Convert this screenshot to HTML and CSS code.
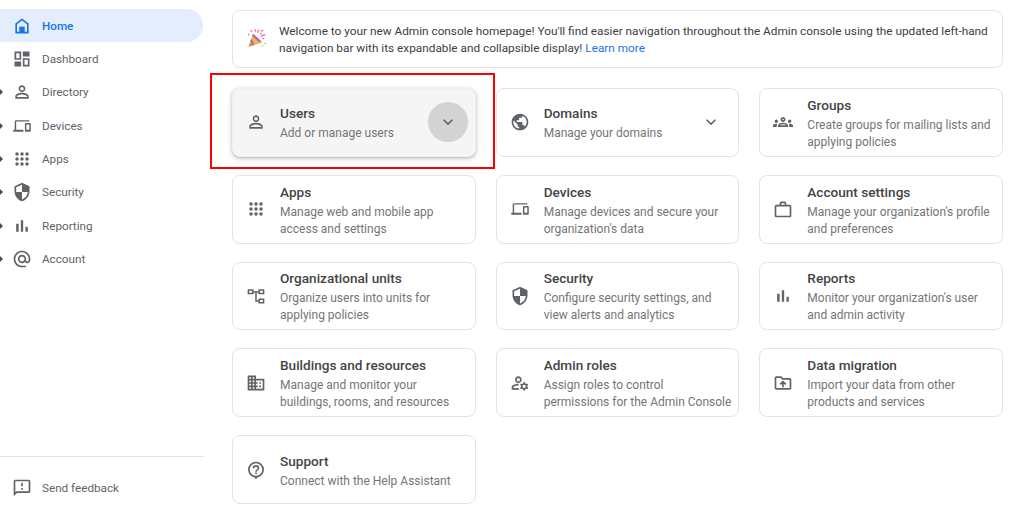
FILE: index.html
```html
<!DOCTYPE html>
<html lang="en">
<head>
<meta charset="utf-8">
<title>Admin console</title>
<link rel="stylesheet" href="styles.css">
</head>
<body>
<aside class="sidebar">
  <nav class="nav">
    <a class="nav-item active"><span class="caret-slot"></span><svg class="icon" viewBox="0 0 24 24"><path d="M12 3L4 9v12h16V9l-8-6zm6 16h-3v-6H9v6H6v-9l6-4.5 6 4.5v9z"/><rect x="9" y="13" width="6" height="7"/></svg><span>Home</span></a>
    <a class="nav-item"><span class="caret-slot"></span><svg class="icon" viewBox="0 0 24 24"><path d="M3 3h8v10H3zm2 2v6h4V5zM13 3h8v6h-8zM3 15h8v6H3zM13 11h8v10h-8zm2 2v6h4v-6z" fill-rule="evenodd"/></svg><span>Dashboard</span></a>
    <a class="nav-item"><span class="caret-slot"><i class="caret"></i></span><svg class="icon" viewBox="0 0 24 24"><path d="M12 5.900c1.160 0 2.100.94 2.100 2.100s-.94 2.100-2.100 2.100S9.900 9.160 9.900 8s.94-2.100 2.100-2.100m0 9c2.970 0 6.100 1.460 6.100 2.100v1.100H5.900V17c0-.64 3.130-2.100 6.100-2.100M12 4C9.790 4 8 5.790 8 8s1.790 4 4 4 4-1.790 4-4-1.790-4-4-4zm0 9c-2.670 0-8 1.340-8 4v3h16v-3c0-2.660-5.330-4-8-4z"/></svg><span>Directory</span></a>
    <a class="nav-item"><span class="caret-slot"><i class="caret"></i></span><svg class="icon" viewBox="-1.700 -1.700 27.400 27.400"><path d="M4 6h18V4H4c-1.100 0-2 .9-2 2v11H0v3h14v-3H4V6zm19 2h-6c-.55 0-1 .45-1 1v10c0 .55.45 1 1 1h6c.55 0 1-.45 1-1V9c0-.55-.45-1-1-1zm-1 9h-4v-7h4v7z"/></svg><span>Devices</span></a>
    <a class="nav-item"><span class="caret-slot"><i class="caret"></i></span><svg class="icon" viewBox="0 0 24 24"><circle cx="6" cy="6" r="2.100"/><circle cx="12" cy="6" r="2.100"/><circle cx="18" cy="6" r="2.100"/><circle cx="6" cy="12" r="2.100"/><circle cx="12" cy="12" r="2.100"/><circle cx="18" cy="12" r="2.100"/><circle cx="6" cy="18" r="2.100"/><circle cx="12" cy="18" r="2.100"/><circle cx="18" cy="18" r="2.100"/></svg><span>Apps</span></a>
    <a class="nav-item"><span class="caret-slot"><i class="caret"></i></span><svg class="icon" viewBox="0 0 24 24"><path d="M12 1L3 5v6c0 5.550 3.840 10.740 9 12 5.160-1.260 9-6.450 9-12V5l-9-4zm0 10.990h7c-.53 4.120-3.280 7.790-7 8.940V12H5V6.300l7-3.110v8.800z"/></svg><span>Security</span></a>
    <a class="nav-item"><span class="caret-slot"><i class="caret"></i></span><svg class="icon" viewBox="0 0 24 24"><path d="M5 9.200h3V19H5zM10.600 5h2.800v14h-2.800zm5.600 8H19v6h-2.800z"/></svg><span>Reporting</span></a>
    <a class="nav-item"><span class="caret-slot"><i class="caret"></i></span><svg class="icon" viewBox="0 0 24 24"><path d="M12 2C6.480 2 2 6.480 2 12s4.480 10 10 10h5v-2h-5c-4.340 0-8-3.660-8-8s3.660-8 8-8 8 3.660 8 8v1.430c0 .79-.71 1.570-1.500 1.570s-1.500-.78-1.500-1.570V12c0-2.760-2.240-5-5-5s-5 2.240-5 5 2.240 5 5 5c1.380 0 2.640-.56 3.540-1.470.65.89 1.770 1.470 2.960 1.470 1.970 0 3.500-1.600 3.500-3.570V12c0-5.520-4.480-10-10-10zm0 13c-1.660 0-3-1.340-3-3s1.340-3 3-3 3 1.340 3 3-1.340 3-3 3z"/></svg><span>Account</span></a>
  </nav>
  <div class="sidebar-foot">
    <a class="nav-item"><span class="caret-slot"></span><svg class="icon" viewBox="0 0 24 24"><path d="M20 2H4c-1.100 0-2 .9-2 2v18l4-4h14c1.100 0 2-.9 2-2V4c0-1.100-.9-2-2-2zm0 14H5.170L4 17.170V4h16v12zm-9-4h2v2h-2zm0-6h2v4h-2z"/></svg><span>Send feedback</span></a>
  </div>
</aside>
<main class="main">
  <section class="banner">
    <svg class="party" viewBox="0 0 24 24">
      <path d="M3 22l5-15 11 10z" fill="#f4b73f"/>
      <path d="M6.200 12.500l3.600 7.200-2.500.9-2.400-4.800zM8 7l7.400 6.800 2 1.800-2.600 1.100L7 9.400z" fill="#a56bc9"/>
      <path d="M3 22l1.600-4.800 2.800 3.400z" fill="#e8873a"/>
      <path d="M10 2l1 3M15 2.500l-2 3.500M20 3l-3 1.500M22 8l-5 2M21 13l-2.500-.5M5 3l2 2" stroke-width="1.600" fill="none" class="conf"/>
      <circle cx="17" cy="7" r="1.100" fill="#f27fb2"/>
      <circle cx="22" cy="18" r="1" fill="#8fd0a0"/>
      <circle cx="19" cy="21" r=".9" fill="#f4b73f"/>
      <circle cx="3" cy="8" r="1" fill="#5aa9e6"/>
    </svg>
    <p>Welcome to your new Admin console homepage! You'll find easier navigation throughout the Admin console using the updated left&#8209;hand navigation bar with its expandable and collapsible display! <a class="link">Learn more</a></p>
  </section>
  <section class="grid">
    <article class="card hovered">
      <svg class="icon" viewBox="0 0 24 24"><path d="M12 5.900c1.160 0 2.100.94 2.100 2.100s-.94 2.100-2.100 2.100S9.900 9.160 9.900 8s.94-2.100 2.100-2.100m0 9c2.970 0 6.100 1.460 6.100 2.100v1.100H5.900V17c0-.64 3.130-2.100 6.100-2.100M12 4C9.790 4 8 5.790 8 8s1.790 4 4 4 4-1.790 4-4-1.790-4-4-4zm0 9c-2.670 0-8 1.340-8 4v3h16v-3c0-2.660-5.330-4-8-4z"/></svg>
      <div class="card-text"><h3>Users</h3><p>Add or manage users</p></div>
      <span class="expand round"><svg viewBox="0 0 24 24"><path d="M7.410 8.590L12 13.170l4.590-4.580L18 10l-6 6-6-6z"/></svg></span>
      <span class="highlight"></span>
    </article>
    <article class="card">
      <svg class="icon" viewBox="0 0 24 24"><path d="M12 2C6.480 2 2 6.480 2 12s4.480 10 10 10 10-4.480 10-10S17.520 2 12 2zm-1 17.930c-3.950-.49-7-3.850-7-7.930 0-.62.08-1.210.21-1.790L9 15v1c0 1.100.9 2 2 2v1.930zm6.900-2.540c-.26-.81-1-1.390-1.900-1.390h-1v-3c0-.55-.45-1-1-1H8v-2h2c.55 0 1-.45 1-1V7h2c1.100 0 2-.9 2-2v-.41c2.930 1.190 5 4.060 5 7.410 0 2.080-.8 3.970-2.100 5.390z"/></svg>
      <div class="card-text"><h3>Domains</h3><p>Manage your domains</p></div>
      <span class="expand"><svg viewBox="0 0 24 24"><path d="M7.410 8.590L12 13.170l4.590-4.580L18 10l-6 6-6-6z"/></svg></span>
    </article>
    <article class="card">
      <svg class="icon" viewBox="0 0 24 24"><path d="M4 13c1.100 0 2-.9 2-2s-.9-2-2-2-2 .9-2 2 .9 2 2 2zm1.130 1.100c-.37-.06-.74-.1-1.130-.1-.99 0-1.930.21-2.780.58C.48 14.900 0 15.620 0 16.430V18h4.500v-1.610c0-.83.23-1.610.63-2.290zM20 13c1.100 0 2-.9 2-2s-.9-2-2-2-2 .9-2 2 .9 2 2 2zm4 3.430c0-.81-.48-1.530-1.220-1.850-.85-.37-1.790-.58-2.780-.58-.39 0-.76.04-1.130.1.4.68.63 1.460.63 2.290V18H24v-1.570zm-7.760-2.780c-1.170-.52-2.610-.9-4.240-.9-1.630 0-3.070.39-4.240.9C6.680 14.130 6 15.210 6 16.390V18h12v-1.610c0-1.180-.68-2.260-1.760-2.740zM8.070 16c.09-.23.13-.39.91-.69.97-.38 1.990-.56 3.020-.56s2.050.18 3.020.56c.77.3.81.46.91.69H8.070zM12 8c.55 0 1 .45 1 1s-.45 1-1 1-1-.45-1-1 .45-1 1-1m0-2c-1.660 0-3 1.340-3 3s1.340 3 3 3 3-1.340 3-3-1.340-3-3-3z"/></svg>
      <div class="card-text"><h3>Groups</h3><p>Create groups for mailing lists and applying policies</p></div>
    </article>
    <article class="card">
      <svg class="icon" viewBox="0 0 24 24"><circle cx="6" cy="6" r="2.100"/><circle cx="12" cy="6" r="2.100"/><circle cx="18" cy="6" r="2.100"/><circle cx="6" cy="12" r="2.100"/><circle cx="12" cy="12" r="2.100"/><circle cx="18" cy="12" r="2.100"/><circle cx="6" cy="18" r="2.100"/><circle cx="12" cy="18" r="2.100"/><circle cx="18" cy="18" r="2.100"/></svg>
      <div class="card-text"><h3>Apps</h3><p>Manage web and mobile app access and settings</p></div>
    </article>
    <article class="card">
      <svg class="icon" viewBox="-1.700 -1.700 27.400 27.400"><path d="M4 6h18V4H4c-1.100 0-2 .9-2 2v11H0v3h14v-3H4V6zm19 2h-6c-.55 0-1 .45-1 1v10c0 .55.45 1 1 1h6c.55 0 1-.45 1-1V9c0-.55-.45-1-1-1zm-1 9h-4v-7h4v7z"/></svg>
      <div class="card-text"><h3>Devices</h3><p>Manage devices and secure your organization's data</p></div>
    </article>
    <article class="card">
      <svg class="icon" viewBox="0 0 24 24"><path d="M20 7h-4V5c0-.55-.22-1.050-.59-1.410C15.050 3.220 14.550 3 14 3h-4c-1.100 0-2 .9-2 2v2H4c-1.100 0-2 .9-2 2v11c0 1.100.9 2 2 2h16c1.100 0 2-.9 2-2V9c0-1.100-.9-2-2-2zM10 5h4v2h-4V5zm10 15H4V9h16v11z"/></svg>
      <div class="card-text"><h3>Account settings</h3><p>Manage your organization's profile and preferences</p></div>
    </article>
    <article class="card">
      <svg class="icon" viewBox="0 0 24 24"><path d="M2 4h7v6H2zm1.800 1.800v2.400h3.400V5.800zM15 4h7v6h-7zm1.800 1.800v2.400h3.400V5.800zM15 15h7v6h-7zm1.800 1.800v2.400h3.400v-2.400zM9 6.200h6V8h-2.100v9.200H15V19h-3.900V8H9z" fill-rule="evenodd"/></svg>
      <div class="card-text"><h3>Organizational units</h3><p>Organize users into units for applying policies</p></div>
    </article>
    <article class="card">
      <svg class="icon" viewBox="0 0 24 24"><path d="M12 1L3 5v6c0 5.550 3.840 10.740 9 12 5.160-1.260 9-6.450 9-12V5l-9-4zm0 10.990h7c-.53 4.120-3.280 7.790-7 8.940V12H5V6.300l7-3.110v8.800z"/></svg>
      <div class="card-text"><h3>Security</h3><p>Configure security settings, and view alerts and analytics</p></div>
    </article>
    <article class="card">
      <svg class="icon" viewBox="0 0 24 24"><path d="M5 9.200h3V19H5zM10.600 5h2.800v14h-2.800zm5.600 8H19v6h-2.800z"/></svg>
      <div class="card-text"><h3>Reports</h3><p>Monitor your organization's user and admin activity</p></div>
    </article>
    <article class="card">
      <svg class="icon" viewBox="0 0 24 24"><path d="M12 7V3H2v18h20V7H12zM6 19H4v-2h2v2zm0-4H4v-2h2v2zm0-4H4V9h2v2zm0-4H4V5h2v2zm4 12H8v-2h2v2zm0-4H8v-2h2v2zm0-4H8V9h2v2zm0-4H8V5h2v2zm10 12h-8v-2h2v-2h-2v-2h2v-2h-2V9h8v10zm-2-8h-2v2h2v-2zm0 4h-2v2h2v-2z"/></svg>
      <div class="card-text"><h3>Buildings and resources</h3><p>Manage and monitor your buildings, rooms, and resources</p></div>
    </article>
    <article class="card">
      <svg class="icon" viewBox="0 0 24 24"><path d="M4 18v-.65c0-.34.16-.66.41-.81C6.100 15.530 8.030 15 10 15c.03 0 .05 0 .08.01.1-.7.3-1.370.59-1.980-.22-.02-.44-.03-.67-.03-2.420 0-4.680.67-6.610 1.820-.88.52-1.390 1.500-1.390 2.530V20h9.260c-.42-.6-.75-1.280-.97-2H4zM10 12c2.210 0 4-1.790 4-4s-1.790-4-4-4-4 1.790-4 4 1.790 4 4 4zm0-6c1.100 0 2 .9 2 2s-.9 2-2 2-2-.9-2-2 .9-2 2-2zM20.750 16c0-.22-.03-.42-.06-.63l1.140-1.010-1-1.730-1.450.49c-.32-.27-.68-.48-1.080-.63L18 11h-2l-.3 1.490c-.4.15-.76.36-1.080.63l-1.450-.49-1 1.730 1.140 1.010c-.03.21-.06.41-.06.63s.03.42.06.63l-1.140 1.010 1 1.730 1.450-.49c.32.27.68.48 1.080.63L16 21h2l.3-1.490c.4-.15.76-.36 1.080-.63l1.450.49 1-1.730-1.140-1.010c.03-.21.06-.41.06-.63zM17 18c-1.100 0-2-.9-2-2s.9-2 2-2 2 .9 2 2-.9 2-2 2z"/></svg>
      <div class="card-text"><h3>Admin roles</h3><p>Assign roles to control<br>permissions for the Admin Console</p></div>
    </article>
    <article class="card">
      <svg class="icon" viewBox="0 0 24 24"><path d="M20 6h-8l-2-2H4c-1.100 0-1.990.9-1.990 2L2 18c0 1.100.9 2 2 2h16c1.100 0 2-.9 2-2V8c0-1.100-.9-2-2-2zm0 12H4V6h5.170l2 2H20v10zM9.410 14.420L11 12.840V17h2v-4.160l1.590 1.590L16 13.010 12.010 9 8 13.010l1.410 1.410z"/></svg>
      <div class="card-text"><h3>Data migration</h3><p>Import your data from other products and services</p></div>
    </article>
    <article class="card">
      <svg class="icon" viewBox="0 0 24 24"><path d="M12 2a9.500 9.500 0 0 0-9.500 9.500c0 4.700 3.400 8.600 7.900 9.400l1.600 2.300 1.600-2.300c4.500-.8 7.900-4.700 7.900-9.400A9.500 9.500 0 0 0 12 2zm0 2a7.500 7.500 0 0 1 1 14.930l-1 .1-1-.1A7.500 7.500 0 0 1 12 4zM11 15h2v2h-2zM12 6a4 4 0 0 0-4 4h2a2 2 0 1 1 4 0c0 1.600-3 1.700-3 4h2c0-1.800 3-2.200 3-4a4 4 0 0 0-4-4z" fill-rule="evenodd"/></svg>
      <div class="card-text"><h3>Support</h3><p>Connect with the Help Assistant</p></div>
    </article>
  </section>
</main>
</body>
</html>
```

FILE: styles.css
```css
* { box-sizing: border-box; }
html, body { margin: 0; height: 100%; }
body {
  display: flex;
  overflow: hidden;
  background: #fff;
  font-family: Roboto, "Liberation Sans", sans-serif;
  color: #3c4043;
}
svg { display: block; fill: currentColor; }
h3, p { margin: 0; }

.sidebar {
  flex: 0 0 204px;
  display: flex;
  flex-direction: column;
  justify-content: space-between;
  padding-top: 9px;
}
.nav { display: flex; flex-direction: column; }
.nav-item {
  display: flex;
  align-items: center;
  height: 33.33px;
  font-size: 11.7px;
  color: #5f6368;
}
.nav-item .icon { margin-right: 10.5px; }
.nav-item.active {
  color: #1a73e8;
  font-weight: 500;
  background: #e3edfb;
  border-radius: 0 17px 17px 0;
  width: 203px;
}
.caret-slot { flex: 0 0 11.5px; display: flex; align-items: center; }
.caret {
  width: 0;
  height: 0;
  border-left: 3px solid #3c5060;
  border-top: 3px solid transparent;
  border-bottom: 3px solid transparent;
}
.icon { flex: 0 0 20px; width: 20px; height: 20px; color: #5f6368; }
.active .icon { color: #1a73e8; }
.sidebar-foot {
  border-top: 1px solid #e3e3e3;
  padding: 15px 0 4px;
}

.main {
  flex: 1;
  padding: 10px 21px 0 28px;
  min-width: 0;
}
.banner {
  display: flex;
  align-items: center;
  gap: 12px;
  height: 58px;
  margin-bottom: 20px;
  padding: 2px 8px 0 13px;
  border: 1px solid #e3e3e3;
  border-radius: 8px;
  font-size: 11.8px;
  line-height: 17px;
}
.party { flex: 0 0 21px; width: 21px; height: 22px; margin-bottom: 4px; }
.conf { stroke: #ef7fb0; }
.link { color: #1a73e8; }

.grid {
  display: grid;
  grid-template-columns: repeat(3, 1fr);
  grid-auto-rows: 68.8px;
  gap: 18px 20px;
}
.card {
  position: relative;
  display: flex;
  align-items: center;
  gap: 14px;
  padding: 0 5px 0 13px;
  border: 1px solid #e3e3e3;
  border-radius: 8px;
}
.card-text { flex: 1; min-width: 0; padding-top: 2px; }
.card h3 {
  font-size: 13.6px;
  font-weight: 500;
  line-height: 19px;
  margin-bottom: 2px;
  color: #444;
}
.card p {
  font-size: 12px;
  line-height: 17px;
  color: #757575;
}
.expand {
  flex: 0 0 40px;
  height: 40px;
  margin-right: 2px;
  display: flex;
  align-items: center;
  justify-content: center;
  color: #5f6368;
}
.expand svg { width: 20px; height: 20px; }
.round { background: #d3d3d3; border-radius: 50%; }
.hovered {
  background: #f5f5f5;
  border-color: #f0f0f0;
  box-shadow: 0 1px 3px rgba(60, 64, 67, .3), 0 2px 6px rgba(60, 64, 67, .15);
}
.highlight {
  position: absolute;
  top: -16px;
  bottom: -13px;
  left: -23px;
  right: -20px;
  border: 2px solid #f00;
  pointer-events: none;
}
```
